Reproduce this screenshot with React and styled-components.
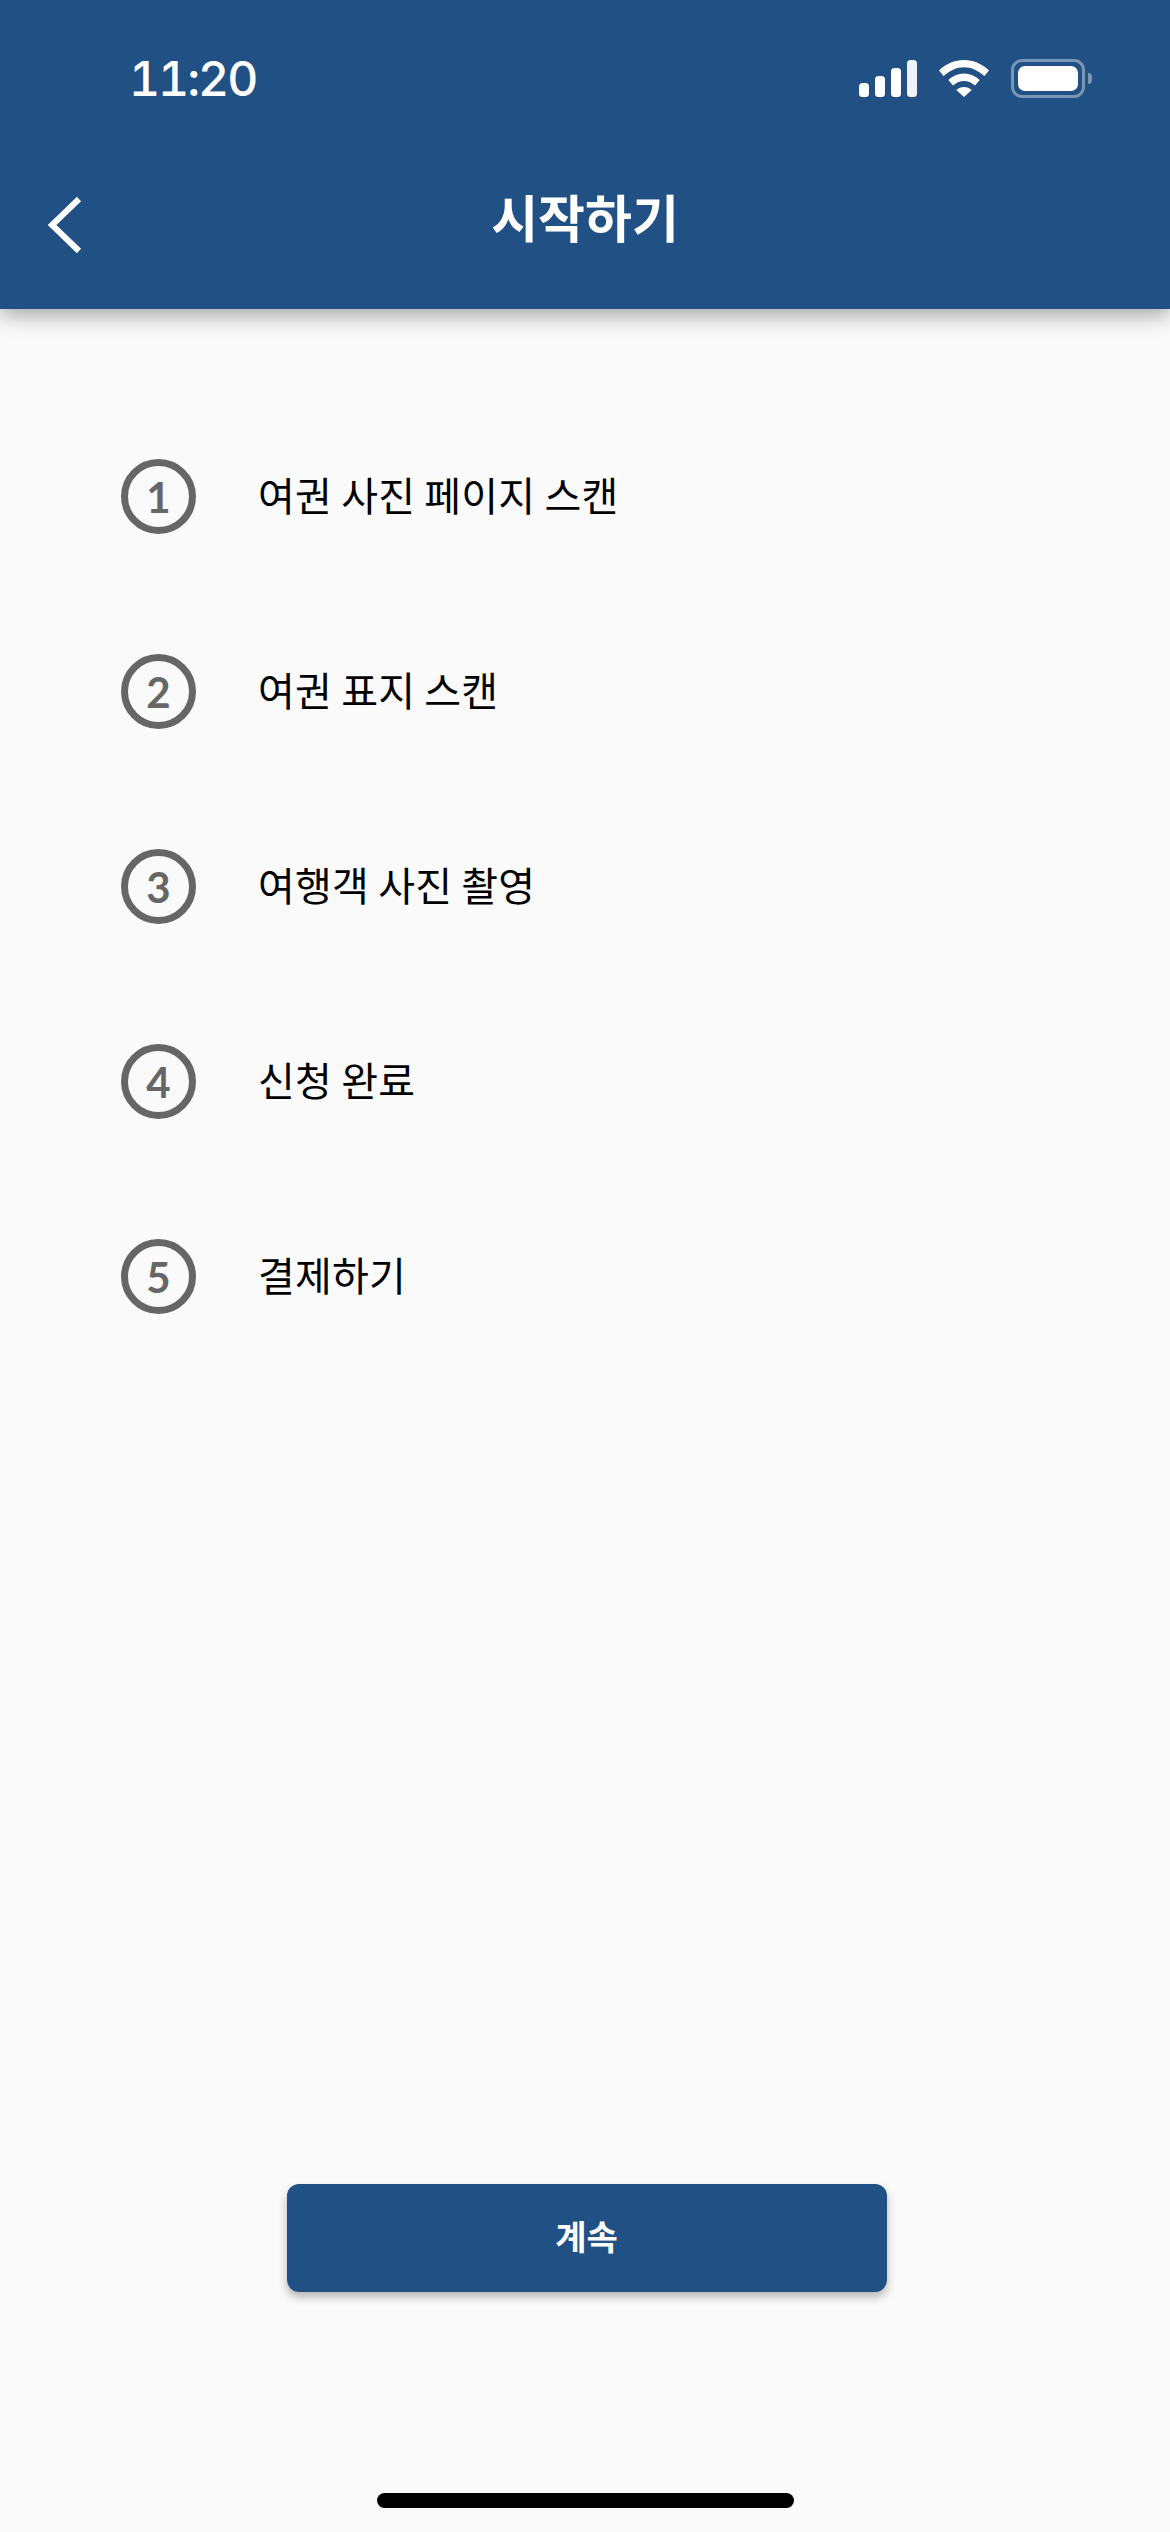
import React from "react";
import styled, { createGlobalStyle } from "styled-components";

const STEPS = [
  "여권 사진 페이지 스캔",
  "여권 표지 스캔",
  "여행객 사진 촬영",
  "신청 완료",
  "결제하기",
];

const KR = `"Noto Sans CJK KR", "Noto Sans", sans-serif`;

const GlobalStyle = createGlobalStyle`
  html, body {
    margin: 0;
    padding: 0;
    background: #fafafa;
  }
  * {
    box-sizing: border-box;
  }
`;

function App() {
  return (
    <Page>
      <GlobalStyle />
      <Header>
        <StatusBar>
          <Time>11:20</Time>
          <StatusIcons>
            <svg width="58" height="37" viewBox="0 0 58 37" fill="#fff">
              <rect x="0" y="23" width="10" height="14" rx="3.5" />
              <rect x="16" y="16" width="10" height="21" rx="3.5" />
              <rect x="32" y="8" width="10" height="29" rx="3.5" />
              <rect x="48" y="0" width="10" height="37" rx="3.5" fill="#f0f3f6" />
            </svg>
            <svg width="50" height="37" viewBox="0 0 50 37" fill="#fff">
              <path d="M25 0C15.5 0 7 3.8 0 10.5l4.6 5.6C10.6 10.6 17.4 7.2 25 7.2s14.4 3.4 20.4 8.9L50 10.5C43 3.8 34.5 0 25 0z" />
              <path d="M25 13.5c-6 0-11.3 2.4-15.7 6.5l4.7 5.6c3-2.8 6.8-4.6 11-4.6s8 1.8 11 4.6l4.7-5.6c-4.4-4.1-9.7-6.5-15.7-6.5z" />
              <path d="M25 27c-3 0-5.5 1-7.7 2.9L25 37l7.7-7.1C30.5 28 28 27 25 27z" />
            </svg>
            <Battery>
              <BatteryFill />
              <BatteryNub />
            </Battery>
          </StatusIcons>
        </StatusBar>
        <NavBar>
          <BackButton aria-label="back">
            <svg width="34" height="58" viewBox="0 0 34 58" fill="none">
              <path d="M31 3L4 29l27 26" stroke="#fff" strokeWidth="6" />
            </svg>
          </BackButton>
          <Title>시작하기</Title>
        </NavBar>
      </Header>
      <Steps>
        {STEPS.map((label, i) => (
          <Step key={label}>
            <StepNumber>{i + 1}</StepNumber>
            <StepLabel>{label}</StepLabel>
          </Step>
        ))}
      </Steps>
      <Footer>
        <ContinueButton>계속</ContinueButton>
        <HomeBar />
      </Footer>
    </Page>
  );
}

const Page = styled.div`
  display: flex;
  flex-direction: column;
  width: 1170px;
  height: 2532px;
  overflow: hidden;
  background: #fafafa;
`;

const Header = styled.header`
  height: 309px;
  background: #215184;
  box-shadow: 0 6px 20px rgba(0, 0, 0, 0.35);
`;

const StatusBar = styled.div`
  display: flex;
  justify-content: space-between;
  align-items: center;
  height: 156px;
  padding: 0 79px 0 129px;
`;

const Time = styled.span`
  font-family: Inter, sans-serif;
  font-size: 48px;
  font-weight: 500;
  font-variant-numeric: tabular-nums;
  letter-spacing: -2px;
  color: #fff;
`;

const StatusIcons = styled.div`
  display: flex;
  align-items: center;
  gap: 22px;
  margin-right: 6px;
`;

const Battery = styled.div`
  position: relative;
  width: 74px;
  height: 39px;
  padding: 4px;
  border: 3px solid rgba(255, 255, 255, 0.4);
  border-radius: 11px;
`;

const BatteryFill = styled.div`
  height: 100%;
  background: #fff;
  border-radius: 7px;
`;

const BatteryNub = styled.div`
  position: absolute;
  top: 11px;
  right: -10px;
  width: 4px;
  height: 11px;
  background: rgba(255, 255, 255, 0.4);
  border-radius: 0 4px 4px 0;
`;

const NavBar = styled.nav`
  position: relative;
  display: flex;
  justify-content: center;
  height: 126px;
  padding-top: 21px;
`;

const BackButton = styled.button`
  position: absolute;
  top: 40px;
  left: 48px;
  display: flex;
  padding: 0;
  background: none;
  border: none;
`;

const Title = styled.h1`
  margin: 0;
  font-family: ${KR};
  font-size: 51px;
  line-height: 78px;
  font-weight: 700;
  color: #fff;
`;

const Steps = styled.ol`
  flex: 1;
  display: flex;
  flex-direction: column;
  gap: 120px;
  margin: 0;
  padding: 150px 0 0 121px;
  list-style: none;
`;

const Step = styled.li`
  display: flex;
  align-items: center;
  gap: 62px;
  height: 75px;
`;

const StepNumber = styled.span`
  display: flex;
  align-items: center;
  justify-content: center;
  width: 75px;
  height: 75px;
  border: 7px solid #666;
  border-radius: 50%;
  font-family: Lato, sans-serif;
  font-size: 42px;
  font-weight: 700;
  color: #666;
`;

const StepLabel = styled.span`
  padding-bottom: 6px;
  font-family: ${KR};
  font-size: 40px;
  font-weight: 400;
  letter-spacing: 0.2px;
  color: #000;
`;

const Footer = styled.footer`
  display: flex;
  flex-direction: column;
  align-items: center;
`;

const ContinueButton = styled.button`
  width: 600px;
  height: 108px;
  margin-left: 3px;
  padding: 0 0 6px;
  background: #215184;
  border: none;
  border-radius: 12px;
  box-shadow: 0 5px 10px rgba(0, 0, 0, 0.28);
  font-family: ${KR};
  font-size: 34px;
  font-weight: 700;
  color: #fff;
`;

const HomeBar = styled.div`
  width: 417px;
  height: 15px;
  margin: 201px 0 24px;
  background: #000;
  border-radius: 8px;
`;

export default App;
